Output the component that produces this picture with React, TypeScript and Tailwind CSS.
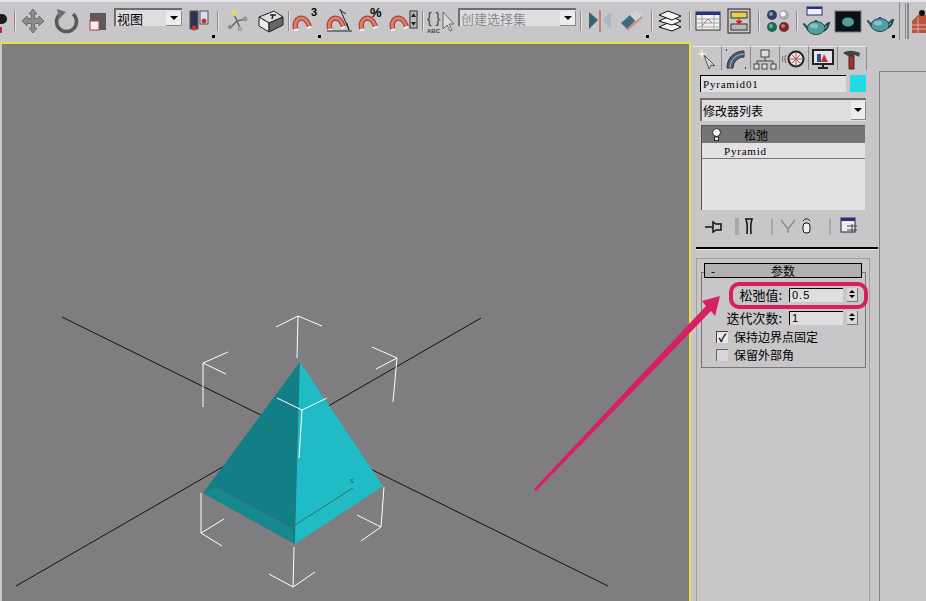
import type { ReactNode } from 'react';

const cjk = "font-['Noto_Sans_CJK_SC','Noto_Sans',sans-serif]";

function Sep({ w }: { w: number }) {
  return (
    <div className="flex shrink-0 justify-center" style={{ width: w }}>
      <div className="h-[20px] w-[2px] border-r border-r-[#e6e4e6] bg-[#8b898b]" />
    </div>
  );
}

function Tool({ w, corner, children }: { w: number; corner?: boolean; children: ReactNode }) {
  return (
    <div className="relative flex h-full shrink-0 items-center justify-center" style={{ width: w }}>
      <svg className="shrink-0" width="30" height="30" viewBox="0 0 30 30">
        {children}
      </svg>
      {corner && <div className="absolute right-[1px] bottom-[2px] h-[3px] w-[3px] bg-black" />}
    </div>
  );
}

function Combo({ w, label, muted }: { w: number; label: string; muted?: boolean }) {
  return (
    <div
      className={`mb-[8px] flex h-[18px] shrink-0 items-center justify-between border-t-2 border-l-2 border-[#6f6d6f] bg-[#dfdde0] text-[13px] leading-none ${cjk} ${muted ? 'text-[#8b898b]' : 'text-black'}`}
      style={{ width: w }}
    >
      <span className="pl-[1px]">{label}</span>
      <span className="flex h-[15px] w-[16px] items-center justify-center border-r border-b border-[#8b898b] bg-[#eeecee]">
        <span className="h-0 w-0 border-x-[4px] border-t-[4px] border-x-transparent border-t-black" />
      </span>
    </div>
  );
}

function Magnet() {
  return (
    <g fill="none" transform="translate(1 5) scale(0.8)">
      <path d="M5 23 C2 15 6 9 12 9 C17 9 20 14 22 20" stroke="#a8443a" strokeWidth="6.500" />
      <path d="M5 23 C2 15 6 9 12 9 C17 9 20 14 22 20" stroke="#dd7f6c" strokeWidth="3.500" />
      <path d="M2 24l6-1M18.500 21.500l6-2" stroke="#f1efef" strokeWidth="2.500" />
    </g>
  );
}

function Teapot({ dy = 0 }: { dy?: number }) {
  return (
    <g transform={`translate(0 ${dy})`}>
      <path d="M2 15c3 0 3 5 6 6M22 18c3-1 4-4 6-4-1 4-2 7-6 8" fill="none" stroke="#1f4a4e" strokeWidth="2" />
      <ellipse cx="15" cy="19" rx="9" ry="6.500" fill="#4f9ea2" stroke="#27474a" />
      <ellipse cx="13" cy="17" rx="4" ry="2.500" fill="#86c2c4" />
      <path d="M13 13l2-2 2 2" fill="none" stroke="#27474a" />
    </g>
  );
}

function Toolbar() {
  return (
    <div className="flex h-[42px] shrink-0 items-center overflow-hidden border-t-2 border-t-[#e4e3ea] bg-[#c8c6c8] pb-[2px]">
      <div className="relative h-full w-[12px] shrink-0">
        <div className="absolute top-[12px] left-0 h-[10px] w-[7px] rounded-r-full bg-[#1d1d1d]" />
        <div className="absolute top-[25px] left-0 h-[6px] w-[2px] bg-[#b52c3a]" />
      </div>
      <Sep w={6} />
      <Tool w={30}>
        <path
          d="M15 3l4 5h-2.500v4.500H21V10l5 5-5 5v-2.500h-4.500V22H19l-4 5-4-5h2.500v-4.500H9V20l-5-5 5-5v2.500h4.500V8H11z"
          fill="#8e8c8e"
          stroke="#6f6d6f"
        />
      </Tool>
      <Tool w={36}>
        <path d="M9 8 A10 10 0 1 0 22 8" fill="none" stroke="#5a585a" strokeWidth="3.500" />
        <path d="M6 3l9 3-7 7z" fill="#6f6d6f" />
      </Tool>
      <Tool w={28}>
        <rect x="7" y="7" width="16" height="17" fill="#5c5a5c" />
        <rect x="7" y="15" width="9" height="9" fill="#f1efef" stroke="#b43c48" />
      </Tool>
      <div className="w-[2px] shrink-0" />
      <Combo w={68} label="视图" />
      <Tool w={34} corner>
        <rect x="6" y="5" width="8" height="18" fill="#2c3350" stroke="#555" />
        <rect x="16" y="5" width="8" height="13" fill="#dcdcf0" stroke="#555" />
        <circle cx="10" cy="22" r="2.500" fill="#c0392f" />
        <circle cx="20" cy="15" r="2.500" fill="#c0392f" />
      </Tool>
      <Sep w={4} />
      <Tool w={34}>
        <path d="M15 15l-3-7M15 15l8-2M15 15l-6 6M15 15l3 7" stroke="#666" strokeWidth="1.500" />
        <circle cx="12" cy="7" r="3" fill="#e6d27a" />
        <circle cx="23" cy="13" r="2.500" fill="#999" />
        <circle cx="8" cy="21" r="2" fill="#888" />
        <circle cx="18" cy="23" r="2.500" fill="#aaa" />
      </Tool>
      <Tool w={34}>
        <path d="M3 11L18 5l9 6-14 6z" fill="#dedede" stroke="#222" />
        <path d="M3 11l10 6v9L3 20z" fill="#eeeeee" stroke="#222" />
        <path d="M13 17l14-6v8l-14 7z" fill="#666" stroke="#222" />
        <path d="M14 9h6M17 9l-1 4" stroke="#222" strokeWidth="1.500" />
      </Tool>
      <Sep w={2} />
      <Tool w={32} corner>
        <Magnet />
        <text x="20" y="10" fontSize="11" fontWeight="700" fontFamily="Liberation Sans">3</text>
      </Tool>
      <Tool w={36}>
        <Magnet />
        <path d="M2 25h25M15 3l9 21M15 4l6 4M22 17l2 7" stroke="#222" fill="none" />
      </Tool>
      <Tool w={28}>
        <Magnet />
        <text x="13" y="11" fontSize="13" fontWeight="700" fontFamily="Liberation Sans">%</text>
      </Tool>
      <Tool w={34}>
        <Magnet />
        <rect x="22" y="5" width="7" height="17" fill="#bbb" stroke="#333" />
        <path d="M23 11l2.500-4 2.500 4zM23 16l2.500 4 2.500-4z" fill="#222" />
      </Tool>
      <Sep w={6} />
      <Tool w={29}>
        <text x="1" y="17" fontSize="14" fontFamily="Liberation Sans" fill="#444">{'{ }'}</text>
        <text x="1" y="27" fontSize="6" fontWeight="700" fontFamily="Liberation Sans" fill="#444">ABC</text>
        <path d="M17 6v17l4-4 3 6 2-1-3-6h5z" fill="#ddd" stroke="#666" />
      </Tool>
      <div className="w-[3px] shrink-0" />
      <Combo w={118} label="创建选择集" muted />
      <Sep w={10} />
      <Tool w={28}>
        <path d="M4 6l9 8-9 9z" fill="#39616f" />
        <path d="M26 6l-9 8 9 9z" fill="#a9bac4" />
        <path d="M15 4v22" stroke="#c46a60" strokeWidth="1.500" />
      </Tool>
      <Tool w={36} corner>
        <path d="M4 17L13 9l6 5-9 9z" fill="#3f6b7c" />
        <path d="M13 9l6-5 7 6-7 6z" fill="#cfd4d8" />
        <path d="M10 24l15-13" stroke="#d08a88" strokeWidth="2" />
      </Tool>
      <Sep w={4} />
      <Tool w={32}>
        <g fill="#f7f7f7" stroke="#111">
          <path d="M4 21l11-5 11 5-9 4z" />
          <path d="M4 15l11-5 11 5-9 4z" />
          <path d="M4 9l9-4 13 5-9 4z" />
        </g>
      </Tool>
      <Sep w={8} />
      <Tool w={28}>
        <rect x="3" y="6" width="24" height="18" fill="#f2f2f2" stroke="#333" />
        <rect x="3" y="6" width="24" height="3" fill="#262e8a" />
        <path d="M3 13h24M3 17h24M3 21h24M9 9v15M21 9v15" stroke="#9aa" />
        <path d="M9 20l6-7 4 4" stroke="#b66" fill="none" />
      </Tool>
      <Tool w={34}>
        <rect x="4" y="3" width="22" height="24" fill="none" stroke="#222" />
        <rect x="7" y="6" width="16" height="6" fill="#e8cf4a" stroke="#333" />
        <rect x="7" y="18" width="16" height="6" fill="#b9b7b9" stroke="#333" />
        <path d="M15 12v4M12 15h6l-3 3z" fill="#bb2d22" stroke="#bb2d22" />
      </Tool>
      <Sep w={6} />
      <Tool w={32}>
        <circle cx="9" cy="9" r="5" fill="#2e3f63" />
        <circle cx="8" cy="8" r="2" fill="#8d98b5" />
        <circle cx="21" cy="9" r="5" fill="#a9a9b3" />
        <circle cx="20" cy="8" r="2.500" fill="#f4f4f6" />
        <circle cx="9" cy="21" r="5" fill="#1f6a5f" />
        <circle cx="8" cy="20" r="2" fill="#6cae9f" />
        <circle cx="21" cy="21" r="5" fill="#7a2a28" />
        <circle cx="20" cy="20" r="2" fill="#b87270" />
      </Tool>
      <Sep w={6} />
      <Tool w={32}>
        <rect x="6" y="1" width="15" height="8" fill="#f0f0f8" stroke="#262e8a" />
        <rect x="6" y="1" width="15" height="2" fill="#262e8a" />
        <Teapot dy={3} />
      </Tool>
      <Tool w={32}>
        <rect x="2" y="5" width="26" height="21" fill="#0c1214" stroke="#777" />
        <ellipse cx="15" cy="16" rx="6" ry="4.500" fill="#4f9ea2" />
      </Tool>
      <Tool w={32} corner>
        <Teapot dy={0} />
      </Tool>
      <div className="flex h-full w-[30px] shrink-0 items-center">
        <div className="ml-[3px] h-full w-[1px] bg-[#8b898b]" />
        <div className="ml-[5px] h-[36px] w-[2px] bg-[#8b898b]" />
        <div className="ml-[1px] h-[36px] w-[2px] bg-[#8b898b]" />
        <svg className="ml-[3px] shrink-0" width="14" height="28" viewBox="0 0 14 28">
          <path d="M0 26V14l6-6h8v18z" fill="#b9543f" />
          <path d="M0 18h14M0 22h14M6 10v16" stroke="#e0b0a0" />
          <circle cx="10" cy="6" r="3" fill="#111" />
        </svg>
      </div>
    </div>
  );
}

function Scene() {
  const white = 'M276 327L298 316L322 326M298 316L297 358M228 352L203 363L226 374M203 363L203 407M372 347L397 358L376 369M397 358L393 402M277 398L302 410L327 398M302 410L299 458M224 519L201 533L222 546M201 533L201 493M357 515L381 527L361 541M381 527L384 487M269 574L293 587L315 572M293 587L294 547';
  return (
    <svg className="block h-full w-full" viewBox="2 44 687 557">
      <rect x="2" y="44" width="687" height="557" fill="#807d80" />
      <path d="M62 317L608 586M481 318L16 586" stroke="#111" strokeWidth="1" />
      <path d="M300 362L203 493L295 544Z" fill="#127f87" />
      <path d="M203 493L295 544L291 527L217 487Z" fill="#158890" />
      <path d="M300 362L383 486L295 544Z" fill="#1fbcc5" />
      <path d="M217 487L291 527M295 525L353 488" stroke="#3d6a6e" strokeWidth="1" fill="none" />
      <text x="350" y="483" fontSize="8" fill="#5a3a44" fontFamily="Liberation Serif">x</text>
      <path d={white} stroke="#fff" strokeWidth="1" fill="none" />
    </svg>
  );
}

function SideTab({ children }: { children: ReactNode }) {
  return (
    <div className="flex h-[24px] w-[29px] items-center justify-center border-t border-r border-t-[#e4e3e5] border-r-[#8b898b]">
      <svg width="24" height="22" viewBox="0 0 24 22">
        {children}
      </svg>
    </div>
  );
}

function Spinner({ value }: { value: string }) {
  return (
    <div className="flex h-[14px] items-center">
      <div className="h-[14px] w-[54px] border-t border-l border-black bg-[#dfdde0] pl-[2px] font-['Liberation_Sans',sans-serif] text-[11px] leading-[13px] tracking-[1px]">
        {value}
      </div>
      <div className="ml-[4px] flex h-[14px] w-[11px] flex-col items-center justify-center gap-[2px] border-r border-b border-[#777] bg-[#d8d6d8]">
        <span className="h-0 w-0 border-x-[3px] border-b-[3px] border-x-transparent border-b-black" />
        <span className="h-0 w-0 border-x-[3px] border-t-[3px] border-x-transparent border-t-black" />
      </div>
    </div>
  );
}

function Panel() {
  return (
    <div className="flex w-[187px] shrink-0 flex-col">
      <div className="flex h-[28px] shrink-0 items-end pl-[1px]">
        <SideTab>
          <path d="M9 7l11 11-4-1-2 4z" fill="#d9d9d9" stroke="#555" />
          <path d="M7 1l1 4 4 1-4 1-1 4-1-4-4-1 4-1z" fill="#f6f6c8" />
        </SideTab>
        <SideTab>
          <path d="M3 20C3 10 10 3 20 3v6c-6 0-11 5-11 11z" fill="#4c5f78" stroke="#333" />
          <path d="M6 20C6 12 12 6 20 6" fill="none" stroke="#aab6c6" />
          <path d="M2 2h1M21 20h1" stroke="#111" strokeWidth="1.500" />
        </SideTab>
        <SideTab>
          <path d="M12 9v4M4 17v-4h16v4" fill="none" stroke="#444" />
          <rect x="8" y="2" width="8" height="7" fill="#ddd" stroke="#444" />
          <rect x="1" y="16" width="5" height="5" fill="#ddd" stroke="#444" />
          <rect x="9" y="16" width="5" height="5" fill="#ddd" stroke="#444" />
          <rect x="18" y="16" width="5" height="5" fill="#ddd" stroke="#444" />
        </SideTab>
        <SideTab>
          <circle cx="14" cy="11" r="7.500" fill="#e6e6e6" stroke="#222" strokeWidth="2" />
          <path d="M10 7l8 8M18 7l-8 8M14 5v12M8 11h12" stroke="#b55" strokeWidth="1" />
          <path d="M4 7c-1.500 3-1.500 5 0 8M1 8c-1 2-1 4 0 6" fill="none" stroke="#666" />
        </SideTab>
        <SideTab>
          <rect x="2" y="2" width="20" height="14" fill="#e4e4f0" stroke="#222" strokeWidth="2" />
          <path d="M6 14V6h4v8z" fill="#3a4a8a" />
          <path d="M10 14l3-8 4 8z" fill="#c8302c" />
          <path d="M7 20h10M12 16v4" stroke="#222" strokeWidth="2" />
        </SideTab>
        <SideTab>
          <path d="M3 5c4-3 10-3 17 0l-1 4c-3-2-5-2-6-1H8z" fill="#444" />
          <path d="M9 8h5v13H9z" fill="#a93226" stroke="#333" />
        </SideTab>
      </div>
      <div className="mt-[5px] flex items-center pl-[8px]">
        <div className="h-[17px] w-[146px] border-t border-l border-black bg-[#e1dfe2] pl-[2px] font-['Liberation_Serif',serif] text-[11px] leading-[16px] tracking-[0.8px]">
          Pyramid01
        </div>
        <div className="ml-[4px] h-[17px] w-[16px] bg-[#22dbe6]" />
      </div>
      <div className={`mt-[6px] ml-[8px] flex h-[23px] w-[166px] items-center justify-between border-t-2 border-l-2 border-[#6f6d6f] bg-[#dfdde0] pl-[1px] text-[12px] leading-none ${cjk}`}>
        <span>修改器列表</span>
        <span className="flex h-[19px] w-[15px] items-center justify-center border-r border-b border-[#8b898b] bg-[#eeecee]">
          <span className="h-0 w-0 border-x-[4px] border-t-[4px] border-x-transparent border-t-black" />
        </span>
      </div>
      <div className="mt-[4px] ml-[9px] h-[85px] w-[164px] border-t border-l border-[#555] bg-[#e3e1e4]">
        <div className={`relative flex h-[17px] items-center bg-[#767376] pl-[42px] text-[12px] leading-none text-black ${cjk}`}>
          <svg className="absolute top-[2px] left-[9px]" width="11" height="13" viewBox="0 0 11 13">
            <circle cx="5.500" cy="4.500" r="4" fill="#f5f5f5" stroke="#222" />
            <rect x="3.500" y="9" width="4" height="3.500" fill="#f5f5f5" stroke="#222" />
          </svg>
          松弛
        </div>
        <div className="h-[16px] border-b border-[#777] pl-[22px] font-['Liberation_Serif',serif] text-[11px] leading-[16px] tracking-[0.8px]">
          Pyramid
        </div>
      </div>
      <div className="mt-[5px] ml-[10px] flex h-[22px] shrink-0 items-center">
        <svg width="162" height="22" viewBox="0 0 162 22">
          <path d="M0 12h8M8 7v10l3-2h5V9h-5z" fill="none" stroke="#111" strokeWidth="1.500" transform="translate(3 0)" />
          <path d="M34 3v17M36 3v17M70 3v17M128 3v17" stroke="#8b898b" />
          <path d="M43 4h8M44 5c2 3 1 10 1 14M50 5c-2 3-1 10-1 14" fill="none" stroke="#111" strokeWidth="1.500" />
          <path d="M79 5l7 9 7-9M86 14v4" fill="none" stroke="#8f8d8f" strokeWidth="1.500" />
          <rect x="101" y="8" width="7" height="10" rx="3" fill="#eee" stroke="#111" />
          <path d="M101 6c2-3 5-3 7 0" fill="none" stroke="#111" />
          <rect x="139" y="3" width="14" height="14" fill="#ececf4" stroke="#223" />
          <rect x="139" y="3" width="14" height="3" fill="#262e8a" />
          <path d="M145 11h10M145 15h10M150 9v8" stroke="#444" />
        </svg>
      </div>
      <div className="mt-[10px] ml-[4px] h-[3px] w-[182px] shrink-0 border-t-2 border-t-black border-b border-b-[#eeecee]" />
      <div className="mt-[8px] ml-[4px] flex w-[174px] flex-1 flex-col border-t border-r border-l border-[#a09ea0] px-[4px]">
        <div className="relative mt-[13px] flex h-[96px] w-[165px] shrink-0 flex-col border border-[#777]">
          <div className={`absolute top-[-10px] left-[2px] flex h-[15px] w-[158px] items-center justify-center border border-black bg-[#b2b0b2] text-[12px] leading-none ${cjk}`}>
            <span className="absolute left-[6px]">-</span>
            参数
          </div>
          <div className={`mt-[10px] flex flex-col text-[12px] leading-none ${cjk}`}>
            <div className="flex h-[23px] items-center">
              <span className="w-[80px] text-right text-[13px]">松弛值:</span>
              <span className="w-[7px]" />
              <Spinner value="0.5" />
            </div>
            <div className="flex h-[23px] items-center">
              <span className="w-[80px] text-right text-[13px]">迭代次数:</span>
              <span className="w-[7px]" />
              <Spinner value="1" />
            </div>
            <div className="flex h-[16px] items-center pl-[14px]">
              <span className="flex h-[12px] w-[12px] items-center justify-center border-t border-l border-[#444] bg-[#e9e7e9] text-[11px] font-bold leading-none">✓</span>
              <span className="ml-[6px]">保持边界点固定</span>
            </div>
            <div className="flex h-[20px] items-center pl-[14px]">
              <span className="h-[12px] w-[12px] border-t border-l border-[#666] bg-[#d8d6d8]" />
              <span className="ml-[6px]">保留外部角</span>
            </div>
          </div>
        </div>
      </div>
    </div>
  );
}

export default function App() {
  return (
    <div className="relative flex h-[601px] w-[926px] flex-col overflow-hidden bg-[#c8c6c8] text-black">
      <Toolbar />
      <div className="flex min-h-0 flex-1">
        <div className="h-full w-[691px] shrink-0 border-t-2 border-r-2 border-l-2 border-t-[#e8e04a] border-r-[#e8e04a] border-l-[#c8c6c8]">
          <Scene />
        </div>
        <div className="w-[1px] shrink-0" />
        <Panel />
        <div className="mt-[29px] flex-1 border-t border-l border-[#858385] bg-[#c8c5c8]" />
      </div>
      {/* pink callout drawn over the screenshot */}
      <div className="absolute top-[282px] left-[729px] h-[27px] w-[139px] rounded-[10px] border-[4px] border-[#d3205f]" />
      <svg className="pointer-events-none absolute top-0 left-0" width="926" height="601">
        <path d="M720 296L702 301L706 306L534 489L536 491L711 311L715 316Z" fill="#d81e64" />
      </svg>
    </div>
  );
}
